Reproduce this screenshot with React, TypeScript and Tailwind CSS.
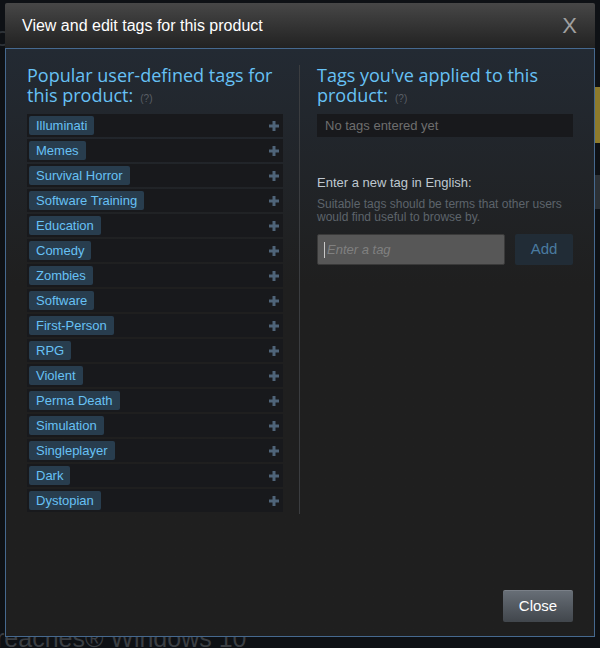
import React from 'react';

const popularTags = [
  'Illuminati',
  'Memes',
  'Survival Horror',
  'Software Training',
  'Education',
  'Comedy',
  'Zombies',
  'Software',
  'First-Person',
  'RPG',
  'Violent',
  'Perma Death',
  'Simulation',
  'Singleplayer',
  'Dark',
  'Dystopian',
];

const sans = "font-['Liberation_Sans',Arial,sans-serif]";
const heading = "font-['Open_Sans',Arial,sans-serif]";

const PlusIcon = () => (
  <svg width="10" height="10" viewBox="0 0 10 10" className="shrink-0">
    <rect x="3.5" y="0" width="3" height="10" fill="#4f6479" />
    <rect x="0" y="3.5" width="10" height="3" fill="#4f6479" />
  </svg>
);

const HelpMark = () => (
  <span className={`${sans} ml-[7px] text-[10px] leading-none text-[#5a5f66]`}>(?)</span>
);

const TagRow = ({ name }: { name: string }) => (
  <div className="flex h-[23px] items-center justify-between bg-[#18191c] pl-[2px] pr-[4px]">
    <span className="flex h-[19px] items-center rounded-[2px] bg-[#283d4e] px-[7px] text-[13px] text-[#67c1f5]">
      {name}
    </span>
    <PlusIcon />
  </div>
);

export default function App() {
  return (
    <div className={`${sans} relative h-[648px] w-[600px] overflow-hidden bg-[#0e1115] pl-[5px] pt-[3px]`}>
      {/* page behind the modal */}
      <div className="absolute left-[-4px] top-[620px] text-[25px] text-[#3b3f44]">reaches® Windows 10</div>
      <div className="absolute left-[-6px] top-[22px] text-[22px] text-[#2e3338]">C</div>
      <div className="absolute right-0 top-[87px] h-[56px] w-[5px] bg-[#8d7a2c]" />
      <div className="absolute right-0 top-[175px] h-[34px] w-[5px] bg-[#2c3136]" />

      {/* modal */}
      <div className="relative flex h-[634px] w-[590px] flex-col">
        <div className="flex h-[45px] shrink-0 items-center justify-between rounded-t-[2px] bg-gradient-to-b from-[#474747] to-[#222222] pl-[17px] pr-[18px]">
          <span className="text-[16px] text-white">View and edit tags for this product</span>
          <span className="text-[22px] leading-none text-[#a0a0a0]">X</span>
        </div>

        <div className="flex flex-1 flex-col border border-[#46698f] bg-gradient-to-b from-[#232a33] to-[#1f1f1f] to-[40%] px-[21px] pb-[14px] pt-[16px]">
          <div className="grid grid-cols-[256px_1px_257px] gap-x-[16px]">
            {/* left column */}
            <div>
              <h2 className={`${heading} text-[18px] leading-[20px] text-[#67c1f5]`}>
                Popular user-defined tags for this product:
                <HelpMark />
              </h2>
              <div className="mt-[9px] flex flex-col gap-[2px]">
                {popularTags.map((t) => (
                  <TagRow key={t} name={t} />
                ))}
              </div>
            </div>

            <div className="mb-[-2px] bg-[#3b3d40]" />

            {/* right column */}
            <div className="pl-[1px]">
              <h2 className={`${heading} text-[18px] leading-[20px] text-[#67c1f5]`}>
                Tags you've applied to this product:
                <HelpMark />
              </h2>
              <div className="mt-[9px] flex h-[23px] items-center bg-[#18191c] px-[8px] text-[13px] text-[#6e6e6e]">
                No tags entered yet
              </div>

              <div className="mt-[38px] text-[13px] leading-[16px] text-[#bfc8d0]">Enter a new tag in English:</div>
              <p className="mt-[7px] text-[12px] leading-[13px] text-[#5d646b]">
                Suitable tags should be terms that other users would find useful to browse by.
              </p>
              <div className="mt-[10px] flex items-center gap-[10px]">
                <div className="flex h-[31px] w-[188px] items-center rounded-[2px] border border-[#3a3a3a] bg-[#575757] px-[6px]">
                  <span className="mr-[2px] h-[16px] w-px bg-[#c8c8c8]" />
                  <span className="text-[13px] italic text-[#808080]">Enter a tag</span>
                </div>
                <div className="flex h-[31px] w-[58px] items-center justify-center rounded-[2px] bg-[#212c36] text-[15px] text-[#4a7ba0]">
                  Add
                </div>
              </div>
            </div>
          </div>

          <div className="flex-1" />

          <div className="flex justify-end">
            <button className="flex h-[32px] w-[70px] items-center justify-center rounded-[2px] border-t border-[#7a8088] bg-gradient-to-b from-[#676e76] to-[#41464c] text-[15px] text-white">
              Close
            </button>
          </div>
        </div>
      </div>
    </div>
  );
}
